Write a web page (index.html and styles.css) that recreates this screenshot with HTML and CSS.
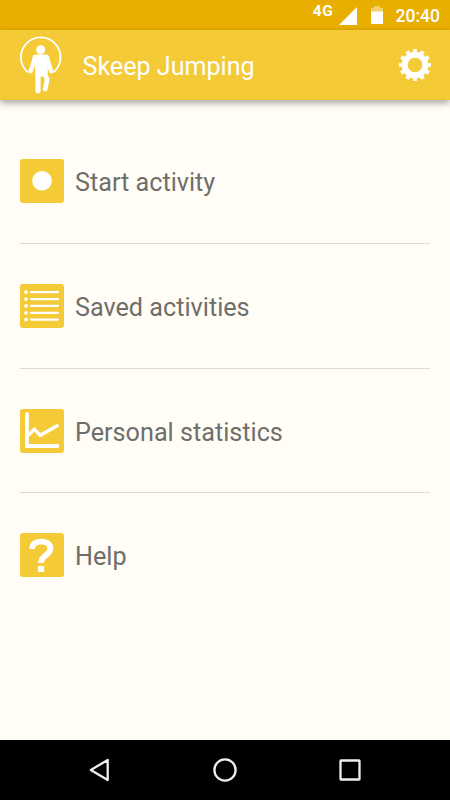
FILE: index.html
```html
<!DOCTYPE html>
<html lang="en">
<head>
<meta charset="utf-8">
<title>Skeep Jumping</title>
<link rel="stylesheet" href="styles.css">
</head>
<body>
<div class="status">
  <span class="network">4G</span>
  <svg class="signal" width="18" height="18" viewBox="0 0 18 18"><path d="M18 0V18H0Z" fill="#fff"/></svg>
  <svg class="battery" width="12" height="18" viewBox="0 0 12 18"><path d="M3 0H9V2H12V6H0V2H3Z" fill="#f3cf68"/><path d="M0 5.5H12V18H0Z" fill="#fff"/></svg>
  <span class="clock">20:40</span>
</div>
<header class="appbar">
  <svg class="logo" width="50" height="66" viewBox="15 32 50 66">
    <path d="M27.9 72.3A19.8 19.8 0 1 1 53.5 72.3" fill="none" stroke="#fff" stroke-width="1.8"/>
    <g fill="#fff" stroke="#fff" stroke-linecap="round" stroke-linejoin="round">
      <circle cx="40.7" cy="49.8" r="4.5" stroke="none"/>
      <path d="M35.5 56H46.3V72.5L44 75H37Z" stroke-width="3"/>
      <path d="M34.8 57L33 64L30.6 71.3M47 57L48.8 64L51.2 71.3" fill="none" stroke-width="4.2"/>
      <path d="M38 73V90.7" fill="none" stroke-width="5.2"/>
      <path d="M44.5 73L47.2 79.5L45.2 88.8" fill="none" stroke-width="4.8"/>
    </g>
  </svg>
  <h1>Skeep Jumping</h1>
  <svg class="gear" width="34" height="34" viewBox="-17 -17 34 34" fill="none" stroke="#fff">
    <circle r="10.3" stroke-width="6"/>
    <circle r="14.2" stroke-width="3.6" pathLength="12" stroke-dasharray=".52 .48" stroke-dashoffset=".26"/>
  </svg>
</header>
<main>
  <div class="row">
    <svg class="tile" viewBox="0 0 44 44"><circle cx="22" cy="21.8" r="9.8" fill="#fff"/></svg>
    <span>Start activity</span>
  </div>
  <div class="row">
    <svg class="tile" viewBox="0 0 44 44">
      <path d="M11 8.2H38M11 15.1H38M11 21.9H38M11 28.8H38M11 35.6H38" stroke="#fff" stroke-width="2.3" stroke-linecap="round"/>
      <path d="M6 8.2h0M6 15.1h0M6 21.9h0M6 28.8h0M6 35.6h0" stroke="#fff" stroke-width="3.8" stroke-linecap="round"/>
    </svg>
    <span>Saved activities</span>
  </div>
  <div class="row">
    <svg class="tile" viewBox="0 0 44 44" fill="none" stroke="#fff" stroke-linecap="round">
      <path d="M7 5V37H37.5" stroke-width="3.8"/>
      <path d="M8 26.5L14.3 20.3L20.2 26.3L37.2 16.7" stroke-width="3.4"/>
    </svg>
    <span>Personal statistics</span>
  </div>
  <div class="row">
    <svg class="tile" viewBox="0 0 44 44">
      <path d="M11.8 16C12.2 11 15.7 8.6 21 8.6C27 8.6 30.4 11.2 30.4 15.5C30.4 22.3 21 22 21 30" fill="none" stroke="#fff" stroke-width="5.8"/>
      <path d="M18 33H24.2V39H18Z" fill="#fff"/>
    </svg>
    <span>Help</span>
  </div>
</main>
<nav class="navbar">
  <svg width="26" height="26" viewBox="0 0 26 26"><path d="M3.8 13L20.7 3V23Z"/></svg>
  <svg width="26" height="26" viewBox="0 0 26 26"><circle cx="13" cy="13" r="10.6"/></svg>
  <svg width="26" height="26" viewBox="0 0 26 26"><rect x="3.5" y="3.5" width="19" height="19" rx=".5"/></svg>
</nav>
</body>
</html>
```
FILE: styles.css
```css
* {
  box-sizing: border-box;
}

body {
  margin: 0;
  height: 800px;
  display: flex;
  flex-direction: column;
  background: #fffdf5;
  font-family: Roboto, sans-serif;
  overflow: hidden;
}

svg {
  display: block;
  flex: none;
}

.status {
  height: 30px;
  flex: none;
  display: flex;
  align-items: flex-start;
  justify-content: flex-end;
  padding-right: 10px;
  background: #e8ae00;
  color: #fff;
}

.network {
  margin: 3px 5px 0 0;
  font-size: 15.5px;
  line-height: 16px;
  font-weight: 700;
  letter-spacing: 0.7px;
}

.signal {
  margin: 7px 14px 0 0;
}

.battery {
  margin: 6px 13px 0 0;
}

.clock {
  margin-top: 6px;
  font-size: 17.5px;
  line-height: 20px;
  font-weight: 500;
}

.appbar {
  height: 70px;
  flex: none;
  display: flex;
  align-items: center;
  padding: 0 18px 0 15px;
  background: #f4ca36;
  border-bottom: 1px solid #f2c52a;
  box-shadow: 0 3px 7px rgba(0, 0, 0, 0.35);
  color: #fff;
}

h1 {
  margin: 4px 0 0 17.5px;
  flex: 1;
  font-size: 25.1px;
  line-height: 30px;
  font-weight: 400;
}

.gear {
  margin-top: 1px;
}

main {
  flex: 1;
  padding: 19.6px 20px 0;
}

.row {
  height: 124.6px;
  display: flex;
  align-items: center;
  gap: 11px;
  border-bottom: 1px solid #dedcd5;
  color: #6f6e6b;
  font-size: 25.2px;
  line-height: 30px;
}

.row:last-child {
  border-bottom-color: transparent;
}

.row span {
  margin-top: 4px;
}

.tile {
  width: 44px;
  height: 44px;
  border-radius: 3px;
  background: #f4ca36;
}

.navbar {
  height: 60px;
  flex: none;
  display: flex;
  align-items: center;
  justify-content: center;
  gap: 99px;
  background: #000;
}

.navbar svg {
  fill: none;
  stroke: #eee;
  stroke-width: 2.3;
  stroke-linejoin: round;
}
```
